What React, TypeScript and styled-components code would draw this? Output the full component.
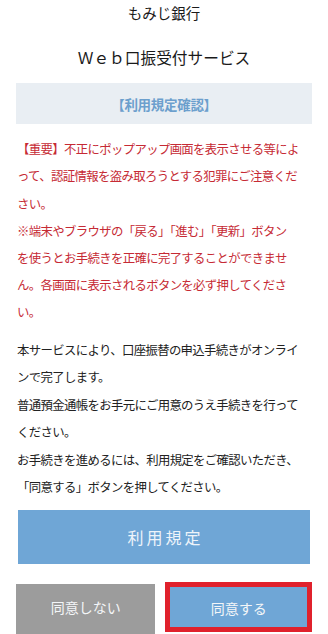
import React from "react";
import styled, { createGlobalStyle } from "styled-components";

const Global = createGlobalStyle`
  html, body { margin: 0; padding: 0; background: #ffffff; }
  body {
    font-family: "Noto Sans CJK JP", "Noto Sans", sans-serif;
    color: #222222;
    overflow: hidden;
  }
`;

const Page = styled.div`
  width: 328px;
  height: 634px;
  box-sizing: border-box;
  padding: 0 16px;
  display: flex;
  flex-direction: column;
  overflow: hidden;
`;

const Title = styled.div<{ $top: number; $size: number }>`
  margin-top: ${(p) => p.$top}px;
  text-align: center;
  font-size: ${(p) => p.$size}px;
  line-height: 26px;
  color: #1a1a1a;
`;

const SectionHead = styled.div`
  margin-top: 12px;
  height: 43px;
  background: #e9eef3;
  display: flex;
  align-items: center;
  justify-content: center;
  font-size: 13.5px;
  font-weight: 700;
  letter-spacing: -0.3px;
  color: #6c9fcd;
`;

const Para = styled.p<{ $warn?: boolean; $top: number; $lh: number }>`
  margin: ${(p) => p.$top}px 0 0 1px;
  font-size: 12.4px;
  letter-spacing: -0.65px;
  line-height: ${(p) => p.$lh}px;
  color: ${(p) => (p.$warn ? "#c62a34" : "#222222")};
  white-space: nowrap;
`;

const TermsButton = styled.button`
  margin: 8px 2px 0;
  height: 57px;
  border: none;
  background: #6fa6d6;
  color: #eef4fa;
  font-family: inherit;
  font-size: 16px;
  letter-spacing: 3px;
  text-indent: 3px;
  padding: 0;
`;

const ButtonRow = styled.div`
  margin-top: 18px;
  display: flex;
  align-items: flex-start;
  gap: 10px;
`;

const ChoiceButton = styled.button<{ $primary?: boolean }>`
  box-sizing: border-box;
  height: 50px;
  width: ${(p) => (p.$primary ? 148 : 141)}px;
  margin-top: ${(p) => (p.$primary ? 0 : 2)}px;
  border: ${(p) => (p.$primary ? "5px solid #e0212c" : "none")};
  background: ${(p) => (p.$primary ? "#6fa6d6" : "#9c9c9c")};
  color: #f4f6f8;
  font-family: inherit;
  font-size: 14px;
  padding: 0;
  display: flex;
  align-items: flex-start;
  justify-content: center;
  line-height: ${(p) => (p.$primary ? 42 : 46)}px;
`;

export default function App() {
  return (
    <>
      <Global />
      <Page>
        <Title $top={0} $size={14.5}>もみじ銀行</Title>
        <Title $top={19} $size={15.7}>Ｗｅｂ口振受付サービス</Title>
        <SectionHead>【利用規定確認】</SectionHead>
        <Para $warn $top={12} $lh={27.2}>
          【重要】不正にポップアップ画面を表示させる等によ
          <br />
          って、認証情報を盗み取ろうとする犯罪にご注意くだ
          <br />
          さい。
          <br />
          ※端末やブラウザの「戻る」「進む」「更新」ボタン
          <br />
          を使うとお手続きを正確に完了することができませ
          <br />
          ん。各画面に表示されるボタンを必ず押してくださ
          <br />
          い。
        </Para>
        <Para $top={10} $lh={27.5}>
          本サービスにより、口座振替の申込手続きがオンライ
          <br />
          ンで完了します。
          <br />
          普通預金通帳をお手元にご用意のうえ手続きを行って
          <br />
          ください。
          <br />
          お手続きを進めるには、利用規定をご確認いただき、
          <br />
          「同意する」ボタンを押してください。
        </Para>
        <TermsButton>利用規定</TermsButton>
        <ButtonRow>
          <ChoiceButton>同意しない</ChoiceButton>
          <ChoiceButton $primary>同意する</ChoiceButton>
        </ButtonRow>
      </Page>
    </>
  );
}
